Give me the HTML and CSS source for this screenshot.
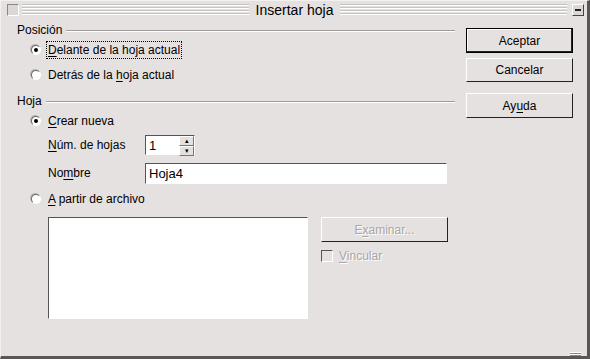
FILE: index.html
```html
<!DOCTYPE html>
<html lang="es">
<head>
  <meta charset="UTF-8">
  <title>Insertar hoja</title>
  <link rel="stylesheet" href="styles.css">
</head>
<body>
  <div class="window">
    <div class="titlebar">
      <span class="tb-box"></span>
      <span class="stripes"></span>
      <span class="title">Insertar hoja</span>
      <span class="stripes"></span>
      <span class="tb-box tb-min"><span class="minus"></span></span>
    </div>

    <div class="content">
      <div class="main">
        <div class="section-head"><span>Posición</span><span class="rule"></span></div>
        <div class="row radio-row">
          <span class="radio checked"></span>
          <span class="focus"><u>D</u>elante de la hoja actual</span>
        </div>
        <div class="row radio-row">
          <span class="radio"></span>
          <span>Detrás de la <u>h</u>oja actual</span>
        </div>

        <div class="section-head head-2"><span>Hoja</span><span class="rule"></span></div>
        <div class="row radio-row">
          <span class="radio checked"></span>
          <span><u>C</u>rear nueva</span>
        </div>
        <div class="row field-row">
          <span class="field-label"><u>N</u>úm. de hojas</span>
          <div class="spin">
            <span class="spin-value">1</span>
            <span class="spin-btns">
              <span class="spin-btn">&#9652;</span>
              <span class="spin-btn">&#9662;</span>
            </span>
          </div>
        </div>
        <div class="row field-row row-name">
          <span class="field-label">No<u>m</u>bre</span>
          <div class="textbox">Hoja4</div>
        </div>
        <div class="row radio-row row-file">
          <span class="radio"></span>
          <span><u>A</u> partir de archivo</span>
        </div>

        <div class="file-area">
          <div class="listbox"></div>
          <div class="file-side">
            <div class="btn disabled">E<u>x</u>aminar...</div>
            <div class="check-row">
              <span class="checkbox"></span>
              <span class="disabled-text"><u>V</u>incular</span>
            </div>
          </div>
        </div>
      </div>

      <div class="buttons">
        <div class="btn btn-default">Aceptar</div>
        <div class="btn">Cancelar</div>
        <div class="btn btn-help">Ay<u>u</u>da</div>
      </div>
    </div>

    <div class="grip"></div>
  </div>
</body>
</html>
```

FILE: styles.css
```css
body {
  margin: 0;
  font-family: "Liberation Sans", Arial, sans-serif;
  font-size: 12px;
  color: #000;
  background: #e6e1e1;
}
u {
  text-decoration: underline;
  text-underline-offset: 2px;
}
.window {
  position: relative;
  width: 590px;
  height: 359px;
  box-sizing: border-box;
  background: #e6e1e1;
  border-left: 1px solid #f4f0f0;
  border-top: 1px solid #f4f0f0;
  border-right: 3px solid #5a5656;
  border-bottom: 3px solid #5a5656;
}

/* title bar */
.titlebar {
  height: 18px;
  display: flex;
  align-items: center;
  padding: 0 3px 0 6px;
  gap: 3px;
}
.tb-box {
  width: 10px;
  height: 10px;
  border: 1px solid;
  border-color: #8a8686 #fff #fff #8a8686;
  background: #dcd7d7;
  flex: none;
}
.tb-min {
  border-color: #fff #444 #444 #fff;
  display: flex;
  align-items: center;
  justify-content: center;
  margin-left: 2px;
}
.minus {
  width: 6px;
  height: 2px;
  background: #222;
}
.stripes {
  flex: 1;
  height: 12px;
  background: repeating-linear-gradient(to bottom, #c8c3c3 0, #c8c3c3 1px, #fff 1px, #fff 2px, transparent 2px, transparent 3px);
}
.title {
  font-size: 14px;
  padding: 0 4px;
  white-space: nowrap;
}

/* layout */
.content {
  display: flex;
  padding: 4px 0 0 16px;
}
.main {
  width: 438px;
  display: flex;
  flex-direction: column;
}
.buttons {
  margin-left: 11px;
  padding-top: 5px;
  width: 107px;
  display: flex;
  flex-direction: column;
  gap: 5px;
}

.section-head {
  height: 14px;
  display: flex;
  align-items: center;
  gap: 4px;
}
.head-2 {
  margin-top: 7px;
}
.rule {
  flex: 1;
  height: 0;
  border-top: 1px solid #a09b9b;
  border-bottom: 1px solid #fff;
  margin-top: 1px;
}

.row {
  height: 24px;
  display: flex;
  align-items: center;
}
.radio-row {
  padding-left: 14px;
  gap: 7px;
}
.section-head + .radio-row {
  height: 25px;
}
.section-head + .radio-row + .radio-row {
  height: 25px;
}
.radio {
  width: 8px;
  height: 8px;
  border-radius: 50%;
  border: 1px solid;
  border-color: #6e6a6a #fff #fff #6e6a6a;
  background: #fff;
  box-shadow: -1px -1px 0 #b8b3b3;
  display: flex;
  align-items: center;
  justify-content: center;
  flex: none;
}
.radio.checked::after {
  content: "";
  width: 4px;
  height: 4px;
  border-radius: 50%;
  background: #000;
}
.focus {
  outline: 1px dotted #000;
  outline-offset: 1px;
}

.field-row {
  padding-left: 31px;
}
.field-label {
  width: 97px;
}
.row-name {
  margin-top: 4px;
}
.row-file {
  margin-top: 2px;
}
.spin {
  width: 48px;
  height: 18px;
  border: 1px solid;
  border-color: #555 #fff #fff #555;
  background: #fff;
  display: flex;
  align-items: center;
  justify-content: space-between;
}
.spin-value {
  padding-left: 3px;
  font-size: 13px;
}
.spin-btns {
  display: flex;
  flex-direction: column;
  height: 18px;
}
.spin-btn {
  width: 13px;
  height: 8px;
  background: #e6e1e1;
  border: 1px solid;
  border-color: #fff #777 #777 #fff;
  font-size: 7px;
  line-height: 8px;
  text-align: center;
  color: #000;
}
.textbox {
  width: 297px;
  height: 19px;
  border: 1px solid;
  border-color: #555 #fff #fff #555;
  background: #fff;
  padding-left: 3px;
  line-height: 19px;
  font-size: 13px;
}

.file-area {
  display: flex;
  padding-left: 31px;
  margin-top: 6px;
}
.listbox {
  width: 258px;
  height: 100px;
  border: 1px solid;
  border-color: #555 #fff #fff #555;
  background: #fff;
}
.file-side {
  margin-left: 13px;
  display: flex;
  flex-direction: column;
  gap: 7px;
}
.check-row {
  display: flex;
  align-items: center;
  gap: 6px;
}
.checkbox {
  width: 10px;
  height: 10px;
  border: 1px solid;
  border-color: #555 #fff #fff #555;
  background: #e6e1e1;
}

/* buttons */
.btn {
  box-sizing: border-box;
  width: 107px;
  height: 24px;
  display: flex;
  align-items: center;
  justify-content: center;
  border: 1px solid;
  border-color: #fff #222 #222 #fff;
  background: #e6e1e1;
}
.btn-default {
  height: 25px;
  outline: 1px solid #000;
  outline-offset: -1px;
  box-shadow: inset -1px -1px 0 #222, inset 1px 1px 0 #fff;
}
.btn-help {
  margin-top: 6px;
  height: 25px;
}
.file-side .btn {
  width: 127px;
  height: 25px;
}
.disabled,
.disabled-text {
  color: #aaa5a5;
  text-shadow: 1px 1px 0 #fff;
}

.grip {
  position: absolute;
  right: 6px;
  bottom: 0;
  width: 11px;
  height: 4px;
  background: repeating-linear-gradient(to bottom, #fff 0, #fff 1px, #8a8686 1px, #8a8686 2px);
}
```
